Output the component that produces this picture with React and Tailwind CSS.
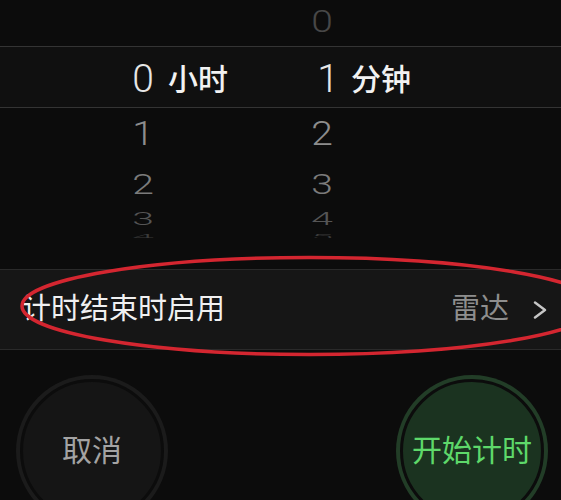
const BG = "#0c0c0c"

function WheelRow({ h, left, right, color, scale, className = "" }) {
  return (
    <div className={`flex items-center ${h} ${className}`}>
      <div className="w-[123px]" />
      <div className="flex w-[179px] items-center">
        <span className={`w-[40px] text-center text-[39px] font-light leading-none ${color} ${scale}`}>{left}</span>
      </div>
      <div className="flex w-[179px] items-center">
        <span className={`w-[40px] text-center text-[39px] font-light leading-none ${color} ${scale}`}>{right}</span>
      </div>
    </div>
  )
}

function Chevron() {
  return (
    <svg width="14" height="18" viewBox="0 0 14 18" fill="none">
      <polyline points="2,1.5 12,9 2,16.5" stroke="#c6c6c6" strokeWidth="2.4" strokeLinecap="round" strokeLinejoin="round" />
    </svg>
  )
}

export default function App() {
  return (
    <div className="relative h-[500px] w-[561px] overflow-hidden bg-[#0c0c0c] font-[Roboto,'Noto_Sans_CJK_SC',sans-serif]">
      {/* picker wheel */}
      <div className="flex flex-col">
        <WheelRow h="h-[46px] pb-[3px]" left="" right="0" color="text-[#474747]" scale="scale-y-[0.82]" />

        <div className="flex h-[62px] items-center border-y border-[#343434] bg-[#101010] pt-[5px]">
          <div className="w-[123px]" />
          <div className="flex w-[179px] items-center">
            <span className="w-[40px] text-center text-[39px] font-light leading-none text-[#e6e6e6]">0</span>
            <span className="ml-[5px] text-[30px] font-medium leading-none text-[#f2f2f2]">小时</span>
          </div>
          <div className="flex w-[179px] items-center">
            <span className="w-[40px] translate-x-[6px] text-center text-[39px] font-light leading-none text-[#e6e6e6]">1</span>
            <span className="ml-[9px] text-[30px] font-medium leading-none text-[#f2f2f2]">分钟</span>
          </div>
        </div>

        <WheelRow h="h-[52px]" left="1" right="2" color="text-[#8d8d8d]" scale="scale-y-[0.86]" />
        <WheelRow h="h-[50px]" left="2" right="3" color="text-[#7b7b7b]" scale="scale-y-[0.71]" />
        <WheelRow h="h-[18px]" left="3" right="4" color="text-[#555555]" scale="scale-y-[0.46]" />
        <WheelRow h="h-[10px] overflow-hidden" left="4" right="5" color="text-[#3a3a3a]" scale="scale-y-[0.2] translate-y-[3px]" />
      </div>

      {/* settings row */}
      <div className="mt-[31px] flex h-[81px] items-center border-y border-[#2a2a2a] bg-[#161616] pl-[22px] pr-[14px]">
        <span className="flex-1 text-[29px] leading-none text-[#f0f0f0]">计时结束时启用</span>
        <span className="text-[29px] leading-none text-[#8e8e8e]">雷达</span>
        <span className="ml-[24px] flex items-center">
          <Chevron />
        </span>
      </div>

      {/* buttons */}
      <div className="mt-[25px] flex justify-between pl-[16px] pr-[13px]">
        <div className="h-[152px] w-[152px] rounded-full bg-[#1b1b1b] p-[4px]">
          <div className="flex h-full w-full items-center justify-center rounded-full border-[3px] border-[#0c0c0c] bg-[#151515]">
            <span className="text-[30px] leading-none text-[#a3a3a3]">取消</span>
          </div>
        </div>
        <div className="h-[152px] w-[152px] rounded-full bg-[#223d27] p-[4px]">
          <div className="flex h-full w-full items-center justify-center rounded-full border-[3px] border-[#0c0c0c] bg-[#1b3320]">
            <span className="text-[30px] leading-none text-[#5ed86a]">开始计时</span>
          </div>
        </div>
      </div>

      {/* red annotation ellipse drawn over the screenshot */}
      <svg className="pointer-events-none absolute left-0 top-0" width="561" height="500" viewBox="0 0 561 500">
        <ellipse cx="309.5" cy="306" rx="287.5" ry="48.5" fill="none" stroke="#d42630" strokeWidth="3.5" />
      </svg>
    </div>
  )
}
